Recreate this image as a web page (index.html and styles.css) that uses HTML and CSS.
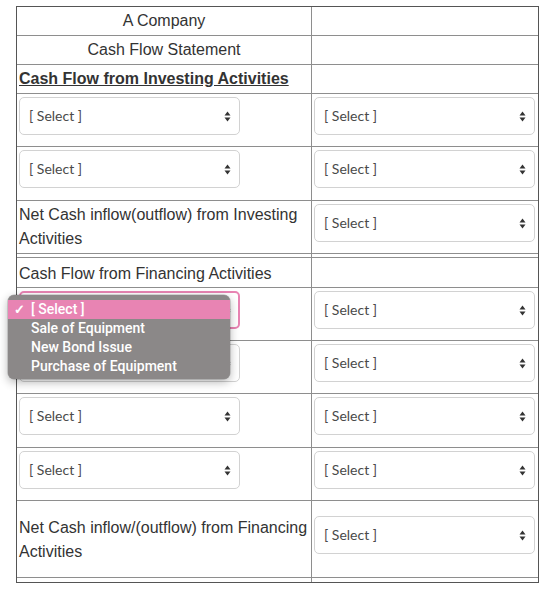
FILE: index.html
```html
<!DOCTYPE html>
<html>
<head>
<meta charset="utf-8">
<link rel="stylesheet" href="styles.css">
</head>
<body>
<div class="page">
  <table class="sheet">
    <colgroup><col class="col-a"><col class="col-b"></colgroup>
    <tr class="text-row"><td class="center">A Company</td><td></td></tr>
    <tr class="text-row"><td class="center">Cash Flow Statement</td><td></td></tr>
    <tr class="text-row"><td class="heading">Cash Flow from Investing Activities</td><td></td></tr>
    <tr>
      <td><span class="sel"><span class="sel-text">[ Select ]</span><svg class="arrows" width="7" height="11" viewBox="0 0 7 11"><path d="M3.5 0.5 L6.5 4.5 L0.5 4.5 Z M3.5 10.5 L6.5 6.5 L0.5 6.5 Z" fill="#333"/></svg></span></td>
      <td><span class="sel"><span class="sel-text">[ Select ]</span><svg class="arrows" width="7" height="11" viewBox="0 0 7 11"><path d="M3.5 0.5 L6.5 4.5 L0.5 4.5 Z M3.5 10.5 L6.5 6.5 L0.5 6.5 Z" fill="#333"/></svg></span></td>
    </tr>
    <tr class="roomy">
      <td><span class="sel"><span class="sel-text">[ Select ]</span><svg class="arrows" width="7" height="11" viewBox="0 0 7 11"><path d="M3.5 0.5 L6.5 4.5 L0.5 4.5 Z M3.5 10.5 L6.5 6.5 L0.5 6.5 Z" fill="#333"/></svg></span></td>
      <td><span class="sel"><span class="sel-text">[ Select ]</span><svg class="arrows" width="7" height="11" viewBox="0 0 7 11"><path d="M3.5 0.5 L6.5 4.5 L0.5 4.5 Z M3.5 10.5 L6.5 6.5 L0.5 6.5 Z" fill="#333"/></svg></span></td>
    </tr>
    <tr>
      <td class="label">Net Cash inflow(outflow) from Investing Activities</td>
      <td><span class="sel"><span class="sel-text">[ Select ]</span><svg class="arrows" width="7" height="11" viewBox="0 0 7 11"><path d="M3.5 0.5 L6.5 4.5 L0.5 4.5 Z M3.5 10.5 L6.5 6.5 L0.5 6.5 Z" fill="#333"/></svg></span></td>
    </tr>
    <tr class="spacer"><td></td><td></td></tr>
    <tr class="text-row wide"><td class="label">Cash Flow from Financing Activities</td><td></td></tr>
    <tr>
      <td><span class="sel focused"><span class="sel-text">[ Select ]</span><svg class="arrows" width="7" height="11" viewBox="0 0 7 11"><path d="M3.5 0.5 L6.5 4.5 L0.5 4.5 Z M3.5 10.5 L6.5 6.5 L0.5 6.5 Z" fill="#333"/></svg></span></td>
      <td><span class="sel"><span class="sel-text">[ Select ]</span><svg class="arrows" width="7" height="11" viewBox="0 0 7 11"><path d="M3.5 0.5 L6.5 4.5 L0.5 4.5 Z M3.5 10.5 L6.5 6.5 L0.5 6.5 Z" fill="#333"/></svg></span></td>
    </tr>
    <tr>
      <td><span class="sel"><span class="sel-text">[ Select ]</span><svg class="arrows" width="7" height="11" viewBox="0 0 7 11"><path d="M3.5 0.5 L6.5 4.5 L0.5 4.5 Z M3.5 10.5 L6.5 6.5 L0.5 6.5 Z" fill="#333"/></svg></span></td>
      <td><span class="sel"><span class="sel-text">[ Select ]</span><svg class="arrows" width="7" height="11" viewBox="0 0 7 11"><path d="M3.5 0.5 L6.5 4.5 L0.5 4.5 Z M3.5 10.5 L6.5 6.5 L0.5 6.5 Z" fill="#333"/></svg></span></td>
    </tr>
    <tr class="roomy">
      <td><span class="sel"><span class="sel-text">[ Select ]</span><svg class="arrows" width="7" height="11" viewBox="0 0 7 11"><path d="M3.5 0.5 L6.5 4.5 L0.5 4.5 Z M3.5 10.5 L6.5 6.5 L0.5 6.5 Z" fill="#333"/></svg></span></td>
      <td><span class="sel"><span class="sel-text">[ Select ]</span><svg class="arrows" width="7" height="11" viewBox="0 0 7 11"><path d="M3.5 0.5 L6.5 4.5 L0.5 4.5 Z M3.5 10.5 L6.5 6.5 L0.5 6.5 Z" fill="#333"/></svg></span></td>
    </tr>
    <tr>
      <td><span class="sel"><span class="sel-text">[ Select ]</span><svg class="arrows" width="7" height="11" viewBox="0 0 7 11"><path d="M3.5 0.5 L6.5 4.5 L0.5 4.5 Z M3.5 10.5 L6.5 6.5 L0.5 6.5 Z" fill="#333"/></svg></span></td>
      <td><span class="sel"><span class="sel-text">[ Select ]</span><svg class="arrows" width="7" height="11" viewBox="0 0 7 11"><path d="M3.5 0.5 L6.5 4.5 L0.5 4.5 Z M3.5 10.5 L6.5 6.5 L0.5 6.5 Z" fill="#333"/></svg></span></td>
    </tr>
    <tr class="tall">
      <td class="label">Net Cash inflow/(outflow) from Financing Activities</td>
      <td><span class="sel"><span class="sel-text">[ Select ]</span><svg class="arrows" width="7" height="11" viewBox="0 0 7 11"><path d="M3.5 0.5 L6.5 4.5 L0.5 4.5 Z M3.5 10.5 L6.5 6.5 L0.5 6.5 Z" fill="#333"/></svg></span></td>
    </tr>
    <tr class="spacer"><td></td><td></td></tr>
  </table>

  <div class="popup">
    <div class="opt active"><span class="check">✓</span>[ Select ]</div>
    <div class="opt">Sale of Equipment</div>
    <div class="opt">New Bond Issue</div>
    <div class="opt">Purchase of Equipment</div>
  </div>
</div>
</body>
</html>
```

FILE: styles.css
```css
html, body {
  margin: 0;
  padding: 0;
  background: #ffffff;
}

.page {
  position: relative;
  padding: 6px 0 0 16px;
  font-family: "Liberation Sans", Arial, sans-serif;
  color: #333333;
}

.sheet {
  border-collapse: separate;
  border-spacing: 0;
  border: 1px solid #555555;
  table-layout: fixed;
  width: 523px;
  font-size: 16px;
  line-height: 24px;
}

.col-a { width: 295px; }
.col-b { width: 226px; }

.sheet td {
  box-sizing: border-box;
  border-right: 1px solid #8e8e8e;
  border-bottom: 1px solid #8e8e8e;
  padding: 2px 2px 2px 2px;
  vertical-align: middle;
}

.sheet td:last-child {
  border-right: none;
  padding-left: 2px;
}

.sheet tr:last-child td {
  border-bottom: none;
}

.text-row td {
  height: 29px;
}

.text-row.wide td {
  height: 30px;
  padding-top: 3px;
  padding-bottom: 1px;
}

.roomy td {
  padding-bottom: 3px;
}

.center {
  text-align: center;
}

.heading {
  font-weight: bold;
  text-decoration: underline;
}

.label {
  text-align: left;
}

.spacer td {
  height: 4px;
  padding: 0;
  font-size: 0;
  line-height: 0;
}

.tall td {
  height: 77px;
  padding-top: 3px;
  padding-bottom: 1px;
}

.tall .sel {
  margin-bottom: 11px;
}

.sel {
  position: relative;
  display: flex;
  align-items: center;
  box-sizing: border-box;
  width: 221px;
  height: 38px;
  margin: 1px 0 9px 0;
  padding-left: 9px;
  border: 1px solid #d2d2d2;
  border-radius: 5px;
  background: #ffffff;
  font-family: Lato, "Liberation Sans", sans-serif;
  font-size: 14px;
  color: #4a4a4a;
}

.sel.focused {
  border: 2px solid #e884b3;
  padding-left: 8px;
}

.arrows {
  position: absolute;
  right: 8px;
  top: 13px;
}

.focused .arrows {
  right: 7px;
  top: 12px;
}

.popup {
  position: absolute;
  left: 8px;
  top: 295px;
  width: 222px;
  box-sizing: border-box;
  padding: 5px 0 3px 0;
  background: #8b8888;
  border-radius: 6px;
  box-shadow: 0 3px 10px rgba(0, 0, 0, 0.3), 0 0 0 0.5px rgba(0, 0, 0, 0.25);
  font-family: Roboto, "Liberation Sans", Arial, sans-serif;
  font-weight: 500;
  font-size: 14px;
  color: #ffffff;
}

.opt {
  position: relative;
  height: 19px;
  line-height: 19px;
  padding-left: 23px;
}

.opt.active {
  background: #e884b3;
}

.check {
  position: absolute;
  left: 6px;
  top: 0;
  font-size: 13px;
  font-weight: bold;
}
```
